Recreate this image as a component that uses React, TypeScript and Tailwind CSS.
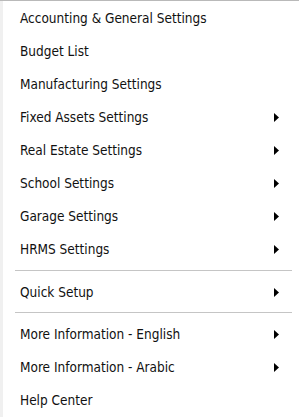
import React from "react";

type Item = { label: string; sub?: boolean } | { sep: true };

const items: Item[] = [
  { label: "Accounting & General Settings" },
  { label: "Budget List" },
  { label: "Manufacturing Settings" },
  { label: "Fixed Assets Settings", sub: true },
  { label: "Real Estate Settings", sub: true },
  { label: "School Settings", sub: true },
  { label: "Garage Settings", sub: true },
  { label: "HRMS Settings", sub: true },
  { sep: true },
  { label: "Quick Setup", sub: true },
  { sep: true },
  { label: "More Information - English", sub: true },
  { label: "More Information - Arabic", sub: true },
  { label: "Help Center" },
];

function Arrow() {
  return (
    <svg width="5" height="9" viewBox="0 0 5 9" className="block">
      <path d="M0 0 L5 4.5 L0 9 Z" fill="#000" />
    </svg>
  );
}

export default function App() {
  return (
    <div
      className="w-[299px] h-[417px] bg-white border-t border-[#b9b9b9] flex overflow-hidden"
      style={{ fontFamily: '"DejaVu Sans Condensed", "DejaVu Sans", sans-serif' }}
    >
      <div className="w-[3px] bg-[#f0f0f0] shrink-0" />
      <div className="flex-1 flex flex-col pt-[1px]">
        {items.map((it, i) =>
          "sep" in it ? (
            <div key={i} className="h-[10px] flex items-center pl-[12px] pr-[7px]">
              <div className="w-full h-[2px] border-t border-[#c5c5c5] border-b border-b-white" />
            </div>
          ) : (
            <div
              key={i}
              className="h-[33px] shrink-0 flex items-center pl-[17px] pr-[20px] text-[13.5px] text-[#111]"
            >
              <span className="flex-1">{it.label}</span>
              {it.sub && <Arrow />}
            </div>
          )
        )}
      </div>
    </div>
  );
}
